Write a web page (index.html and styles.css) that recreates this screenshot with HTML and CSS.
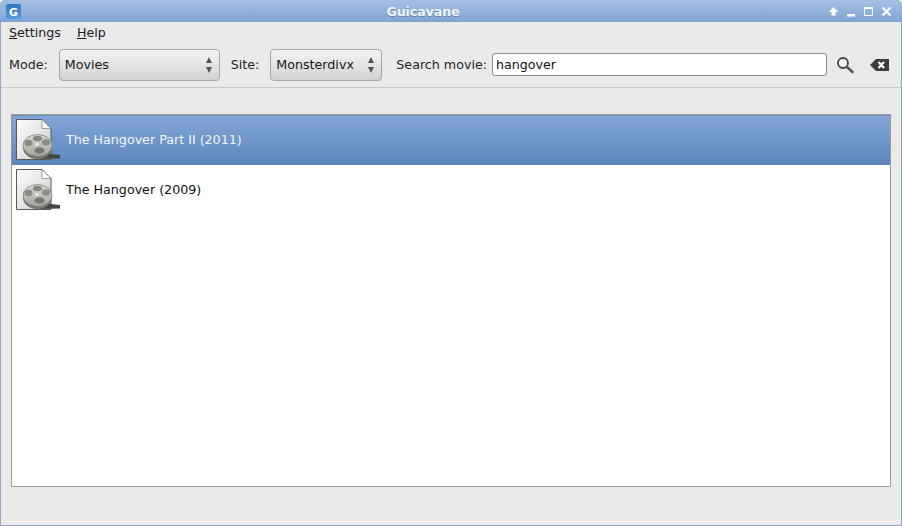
FILE: index.html
```html
<!DOCTYPE html>
<html lang="en">
<head>
<meta charset="utf-8">
<title>Guicavane</title>
<link rel="stylesheet" href="styles.css">
</head>
<body>
<svg class="defs" width="0" height="0" aria-hidden="true">
  <defs>
    <linearGradient id="page" x1="0" y1="0" x2="1" y2="1">
      <stop offset="0" stop-color="#fbfbfb"/><stop offset=".5" stop-color="#e6e6e6"/><stop offset="1" stop-color="#c4c4c4"/>
    </linearGradient>
    <linearGradient id="reel" x1="0" y1="0" x2="0" y2="1">
      <stop offset="0" stop-color="#d9d9d4"/><stop offset="1" stop-color="#a4a49e"/>
    </linearGradient>
    <symbol id="film" viewBox="0 0 50 50">
      <path d="M4.500 4.500H30L39 13.500V44.500H4.500Z" fill="url(#page)" stroke="#55585c"/>
      <path d="M30 4.500V13.500H39Z" fill="#fff" stroke="#80848a" stroke-width=".8"/>
      <path d="M30 38L48 40V43.500L28 44Z" fill="#45453f"/>
      <ellipse cx="25.500" cy="33" rx="14.500" ry="11" fill="#74746e"/>
      <ellipse cx="25.500" cy="30.500" rx="14.500" ry="11" fill="url(#reel)" stroke="#77776f" stroke-width=".7"/>
      <ellipse cx="25.500" cy="23.500" rx="4.600" ry="2.800" fill="#85857f"/>
      <ellipse cx="16.500" cy="28" rx="4" ry="3.200" fill="#8c8c86"/>
      <ellipse cx="34" cy="27.500" rx="4" ry="3.200" fill="#8c8c86"/>
      <ellipse cx="27.500" cy="35.500" rx="5" ry="3.300" fill="#77776f"/>
      <ellipse cx="25" cy="29.500" rx="1.800" ry="1.200" fill="#f0f0ec"/>
    </symbol>
  </defs>
</svg>
<div class="window">
  <header class="titlebar">
    <span class="app-icon">G</span>
    <span class="title">Guicavane</span>
    <div class="win-buttons">
      <svg width="11" height="11" viewBox="0 0 11 11"><path d="M5.500 1L10.500 6H7.500V9.500H3.500V6H.5Z" fill="#fff"/></svg>
      <svg width="10" height="11" viewBox="0 0 10 11"><path d="M1 8h8v2.500H1z" fill="#fff"/></svg>
      <svg width="11" height="11" viewBox="0 0 11 11"><path d="M1.500 1.500h8v8h-8z" fill="none" stroke="#fff" stroke-width="1"/><path d="M1 1h9v2H1z" fill="#fff"/></svg>
      <svg width="11" height="11" viewBox="0 0 11 11"><path d="M1.500 1.500L9.500 9.500M9.500 1.500L1.500 9.500" stroke="#fff" stroke-width="2"/></svg>
    </div>
  </header>
  <nav class="menubar">
    <span class="menu-item"><u>S</u>ettings</span>
    <span class="menu-item"><u>H</u>elp</span>
  </nav>
  <div class="toolbar">
    <label class="label">Mode:</label>
    <div class="combo combo-mode">
      <span>Movies</span>
      <span class="arrows"><i class="up"></i><i class="down"></i></span>
    </div>
    <label class="label label-site">Site:</label>
    <div class="combo combo-site">
      <span>Monsterdivx</span>
      <span class="arrows"><i class="up"></i><i class="down"></i></span>
    </div>
    <label class="label label-search">Search movie:</label>
    <div class="entry">hangover</div>
    <svg class="tool-search" width="18" height="18" viewBox="0 0 18 18">
      <circle cx="7" cy="7" r="5" fill="#fff" fill-opacity=".5" stroke="#444" stroke-width="1.800"/>
      <path d="M11 11L16.500 16" stroke="#555" stroke-width="2.600" stroke-linecap="round"/>
    </svg>
    <svg class="tool-clear" width="19" height="14" viewBox="0 0 19 14">
      <path d="M0 7L6 1H19V13H6Z" fill="#3c3c3c"/>
      <path d="M8.500 4L14 10M14 4L8.500 10" stroke="#fff" stroke-width="2.200"/>
    </svg>
  </div>
  <main class="content">
    <section class="list">
      <div class="row selected">
        <svg class="row-icon" width="50" height="50"><use href="#film"/></svg>
        <span class="row-text">The Hangover Part II (2011)</span>
      </div>
      <div class="row">
        <svg class="row-icon" width="50" height="50"><use href="#film"/></svg>
        <span class="row-text">The Hangover (2009)</span>
      </div>
    </section>
  </main>
</div>
</body>
</html>
```
FILE: styles.css
```css
* { box-sizing: border-box; }
html, body { margin: 0; height: 100%; }
body {
  font-family: "DejaVu Sans", sans-serif;
  font-size: 9.5pt;
  color: #1a1a1a;
  overflow: hidden;
}
.defs { position: absolute; }
.window {
  width: 902px;
  height: 526px;
  display: flex;
  flex-direction: column;
  background: #eaeaea;
  border: 1px solid #93a7c9;
  border-top: 0;
  border-radius: 5px 5px 0 0;
}
.titlebar {
  height: 22px;
  flex: none;
  margin: 0 -1px;
  display: flex;
  align-items: center;
  position: relative;
  padding: 0 10px 0 6px;
  border-radius: 5px 5px 0 0;
  background: linear-gradient(#a5bfe2, #7fa4d5);
  color: #fff;
}
.app-icon {
  width: 15px;
  height: 15px;
  border-radius: 2px;
  background: linear-gradient(#2f78c4, #5f9ad8);
  font-size: 11px;
  font-weight: bold;
  line-height: 17px;
  text-align: center;
}
.title {
  position: absolute;
  left: 0;
  right: 56px;
  text-align: center;
  font-size: 12.5px;
  font-weight: bold;
  color: #f2f5fa;
  text-shadow: 0 1px 0 #5f82b2;
}
.win-buttons {
  margin-left: auto;
  display: flex;
  gap: 7px;
}
.menubar {
  height: 22px;
  flex: none;
  display: flex;
  align-items: center;
  gap: 16px;
  padding: 0 0 2px 8px;
}
.toolbar {
  height: 44px;
  flex: none;
  display: flex;
  align-items: center;
  padding: 0 0 2px 8px;
  border-bottom: 1px solid #c9c9c9;
}
.label { color: #1f1f1f; white-space: nowrap; }
.label-site { margin-left: 11px; }
.label-search { margin-left: 14px; }
.combo {
  height: 32px;
  flex: none;
  display: flex;
  align-items: center;
  justify-content: space-between;
  padding: 0 5px;
  margin-left: 11px;
  border: 1px solid #a5a5a5;
  border-radius: 4px;
  background: linear-gradient(#f4f4f4, #d2d2d2);
  color: #161616;
}
.combo-mode { width: 161px; }
.combo-site { width: 112px; }
.arrows {
  display: flex;
  flex-direction: column;
  gap: 4px;
  margin-right: 2px;
}
.arrows i {
  display: block;
  border-left: 3px solid transparent;
  border-right: 3px solid transparent;
}
.arrows .up { border-bottom: 6px solid #555; }
.arrows .down { border-top: 6px solid #555; }
.entry {
  width: 335px;
  height: 23px;
  flex: none;
  margin-left: 5px;
  padding: 0 3px;
  line-height: 21px;
  background: #fff;
  border: 1px solid #8c8c8c;
  border-radius: 3px;
  color: #111;
}
.tool-search { margin-left: 9px; flex: none; margin-top: 1px; }
.tool-clear { margin-left: 16px; flex: none; margin-top: 1px; }
.content {
  flex: 1;
  min-height: 0;
  padding: 26px 10px 38px;
}
.list {
  height: 100%;
  background: #fff;
  border: 1px solid #9a9a9a;
}
.row {
  height: 50px;
  display: flex;
  align-items: center;
  gap: 4px;
  color: #111;
}
.row-text { margin-bottom: 2px; }
.row.selected {
  background: linear-gradient(#83a7d8, #5e86bb);
  color: #f1f5fa;
  box-shadow: inset 0 1px 0 #6f8fbd;
}
.row-icon { flex: none; }
```
